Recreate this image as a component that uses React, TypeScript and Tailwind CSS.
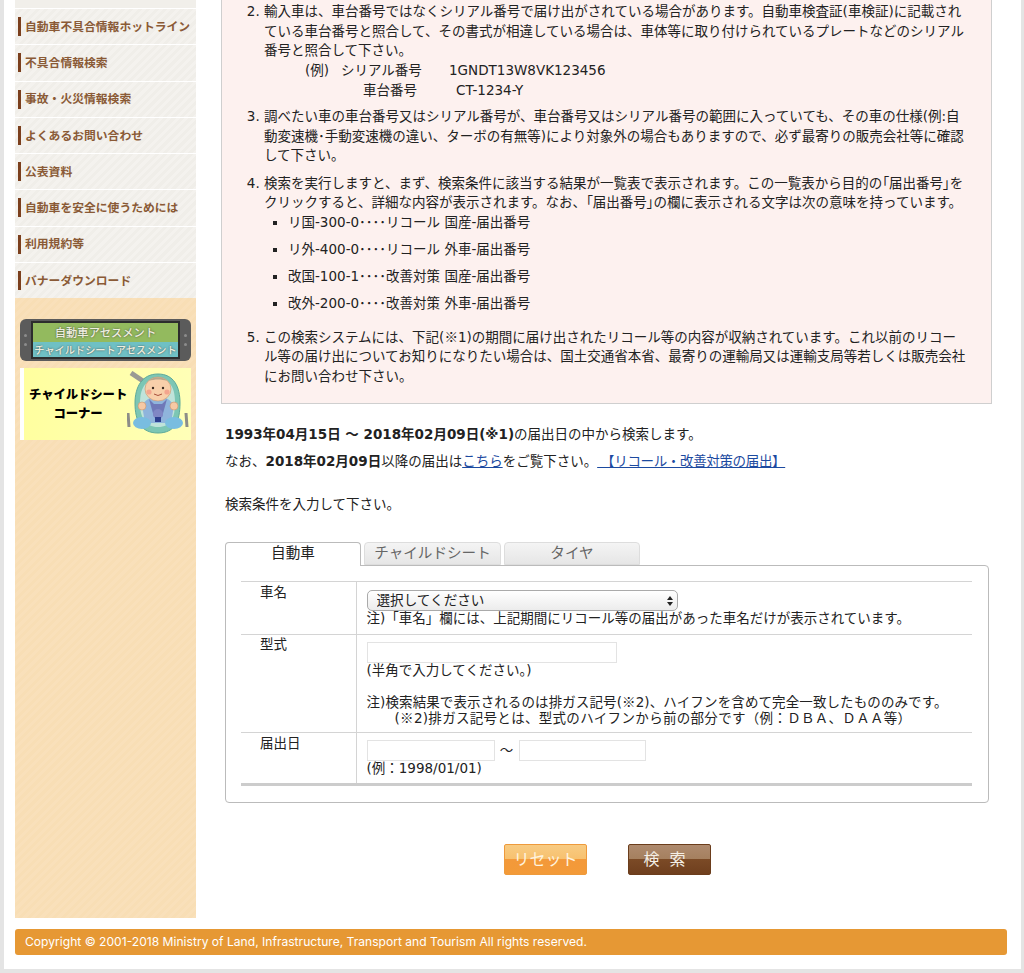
import React from "react";

const nav = [
  "自動車不具合情報ホットライン",
  "不具合情報検索",
  "事故・火災情報検索",
  "よくあるお問い合わせ",
  "公表資料",
  "自動車を安全に使うためには",
  "利用規約等",
  "バナーダウンロード",
];

const subs = [
  "リ国-300-0････リコール 国産-届出番号",
  "リ外-400-0････リコール 外車-届出番号",
  "改国-100-1････改善対策 国産-届出番号",
  "改外-200-0････改善対策 外車-届出番号",
];

function Baby() {
  return (
    <svg viewBox="0 0 62 66" className="h-[66px] w-[62px] shrink-0">
      <path d="M4 2 L16 10" stroke="#9a9a94" strokeWidth="5" fill="none" />
      <path d="M1 42 L2 56 M59 42 L60 56" stroke="#8d8d88" strokeWidth="3" fill="none" />
      <path d="M31 3 C47 3 53 16 53 32 C53 50 48 62 31 62 C14 62 8 50 8 32 C8 16 15 3 31 3 Z" fill="#7cc6b4" stroke="#5da99a" />
      <path d="M31 8 C44 8 48 18 48 32 C48 46 44 56 31 56 C18 56 13 46 13 32 C13 18 18 8 31 8 Z" fill="#bfe3da" />
      <path d="M16 40 C14 30 22 26 31 26 C40 26 48 30 46 40 L44 52 L18 52 Z" fill="#8fb4dc" />
      <path d="M22 28 L27 46 H35 L40 28 L35 33 H27 Z" fill="#6f78b8" />
      <circle cx="31" cy="43" r="5" fill="#8087c4" />
      <rect x="28" y="46" width="6" height="5" fill="#2d3f8f" />
      <ellipse cx="15" cy="52" rx="9" ry="6" fill="#79bde0" />
      <ellipse cx="47" cy="52" rx="9" ry="6" fill="#79bde0" />
      <circle cx="15" cy="35" r="4" fill="#f6c9a4" stroke="#c9946c" strokeWidth="0.6" />
      <circle cx="47" cy="35" r="4" fill="#f6c9a4" stroke="#c9946c" strokeWidth="0.6" />
      <ellipse cx="31" cy="18" rx="13" ry="12" fill="#f8cfaa" stroke="#c9946c" strokeWidth="0.6" />
      <path d="M22 10 C26 5 36 5 40 10 C35 8 27 8 22 10 Z" fill="#b8a78d" />
      <circle cx="26" cy="17" r="1.2" fill="#3a2a20" />
      <circle cx="36" cy="17" r="1.2" fill="#3a2a20" />
      <circle cx="22" cy="21" r="2.6" fill="#f3a58e" />
      <circle cx="40" cy="21" r="2.6" fill="#f3a58e" />
      <path d="M27 23 Q31 26 35 23" stroke="#a8503c" strokeWidth="1" fill="none" />
    </svg>
  );
}

function Arrows() {
  return (
    <svg viewBox="0 0 8 12" className="pointer-events-none absolute right-[4px] top-[5px] h-[12px] w-[8px]">
      <path d="M4 1 L7 5 H1 Z M4 11 L1 7 H7 Z" fill="#222" />
    </svg>
  );
}

function Screws() {
  return (
    <span className="flex w-[11px] shrink-0 flex-col items-center gap-[6px]">
      <span className="h-[3px] w-[3px] rounded-full bg-[#8c8c8c]" />
      <span className="h-[3px] w-[3px] rounded-full bg-[#8c8c8c]" />
    </span>
  );
}

function Mark() {
  return <span className="font-['Noto_Sans_CJK_JP',sans-serif] leading-none">※</span>;
}

function Quoted({ children }: { children: React.ReactNode }) {
  return <span className="[font-feature-settings:'palt'] font-['Noto_Sans_CJK_JP',sans-serif] leading-none">「{children}」</span>;
}

const field = "block h-[21px] border border-[#e3e3e3] bg-white";

export default function App() {
  return (
    <div className="flex h-[973px] w-[1024px] flex-col overflow-hidden border-b-4 border-l-4 border-r-[3px] border-[#e4e4e4] bg-white font-['DejaVu_Sans','Noto_Sans_CJK_JP',sans-serif] text-[13.5px] leading-[19.7px] text-[#222]">
      <div className="flex h-[918px] pl-[11px]">
        <aside className="flex h-full w-[181px] shrink-0 flex-col bg-[repeating-linear-gradient(135deg,#f9e0ba_0px,#f9e0ba_3px,#f8deb5_3px,#f8deb5_6px)]">
          <div className="h-[8px] bg-[#f1efea]" />
          <ul className="bg-white">
            {nav.map((n) => (
              <li
                key={n}
                className="mt-px flex h-[35.25px] items-center bg-[repeating-linear-gradient(135deg,#f4f2ee_0px,#f4f2ee_3px,#f0eee9_3px,#f0eee9_6px)] pl-[3px]"
              >
                <span className="mr-[4px] h-[19px] w-[3px] shrink-0 bg-[#7b3f1d]" />
                <span className="-mt-[2px] whitespace-nowrap font-['Noto_Sans_CJK_JP',sans-serif] text-[11.8px] font-bold text-[#8a5a36]">{n}</span>
              </li>
            ))}
          </ul>
          <div className="flex flex-col gap-[7px] px-[5px] pt-[21px]">
            <div className="flex h-[42px] items-center rounded-[6px] bg-[#5b5b5b]">
              <Screws />
              <div className="flex h-[38px] min-w-0 flex-1 flex-col overflow-hidden border-2 border-[#2d2d2d] text-center font-['Noto_Sans_CJK_JP',sans-serif] font-medium text-[#eeeedf] [text-shadow:0_0_2px_#444]">
                <span className="h-[19px] whitespace-nowrap bg-[#93ba5e] text-[11.3px] leading-[19px]">自動車アセスメント</span>
                <span className="h-[15px] whitespace-nowrap bg-[#6fc0c4] text-[10.2px] leading-[15px]">チャイルドシートアセスメント</span>
              </div>
              <Screws />
            </div>
            <div className="flex h-[72px] items-center border-l-4 border-white bg-[linear-gradient(100deg,#ffff9e,#ffffb8)] pl-[5px] pr-[4px]">
              <span className="w-[98px] shrink-0 whitespace-nowrap text-center font-['Noto_Sans_CJK_JP',sans-serif] text-[12.4px] font-black leading-[19px] tracking-[-0.1px] text-black">
                チャイルドシート
                <br />
                コーナー
              </span>
              <Baby />
            </div>
          </div>
        </aside>

        <main className="min-w-0 flex-1 pl-[29px] pr-[11px]">
          <section className="-ml-[4px] h-[404px] w-[771px] border-x border-b border-[#cfcfcf] bg-[#fdf1ef] pl-[42px] pt-[2px]">
            <ol start={2} className="list-decimal whitespace-nowrap">
              <li className="mb-[6.5px]">
                輸入車は、車台番号ではなくシリアル番号で届け出がされている場合があります。自動車検査証(車検証)に記載され
                <br />
                ている車台番号と照合して、その書式が相違している場合は、車体等に取り付けられているプレートなどのシリアル
                <br />
                番号と照合して下さい。
                <div className="flex pl-[41px]">
                  <span className="w-[36px]">(例)</span>
                  <span className="w-[108px]">シリアル番号</span>
                  <span>1GNDT13W8VK123456</span>
                </div>
                <div className="flex pl-[99px]">
                  <span className="w-[93px]">車台番号</span>
                  <span>CT-1234-Y</span>
                </div>
              </li>
              <li className="mb-[7.5px]">
                調べたい車の車台番号又はシリアル番号が、車台番号又はシリアル番号の範囲に入っていても、その車の仕様(例:自
                <br />
                動変速機･手動変速機の違い、ターボの有無等)により対象外の場合もありますので、必ず最寄りの販売会社等に確認
                <br />
                して下さい。
              </li>
              <li className="mb-[14px]">
                検索を実行しますと、まず、検索条件に該当する結果が一覧表で表示されます。この一覧表から目的の<Quoted>届出番号</Quoted>を
                <br />
                クリックすると、詳細な内容が表示されます。なお、<Quoted>届出番号</Quoted>の欄に表示される文字は次の意味を持っています。
                <ul className="list-[square] pl-[24px]">
                  {subs.map((s) => (
                    <li key={s} className="mb-[7.3px]">{s}</li>
                  ))}
                </ul>
              </li>
              <li>
                この検索システムには、下記(<Mark />1)の期間に届け出されたリコール等の内容が収納されています。これ以前のリコー
                <br />
                ル等の届け出についてお知りになりたい場合は、国土交通省本省、最寄りの運輸局又は運輸支局等若しくは販売会社
                <br />
                にお問い合わせ下さい。
              </li>
            </ol>
          </section>

          <div className="whitespace-nowrap pt-[17px] leading-[27px]">
            <p><b>1993年04月15日 ～ 2018年02月09日(※1)</b>の届出日の中から検索します。</p>
            <p>
              なお、<b>2018年02月09日</b>以降の届出は<a href="#" className="text-[#1c4aa0] underline">こちら</a>をご覧下さい。
              <a href="#" className="text-[#1c4aa0] underline tracking-[-0.35px]">&nbsp;【リコール・改善対策の届出】</a>
            </p>
            <p className="mt-[16px]">検索条件を入力して下さい。</p>
          </div>

          <div className="mt-[24px] flex h-[24px] gap-[3px] text-center text-[14.6px] leading-[20px]">
            <div className="relative z-10 h-[24px] w-[136px] rounded-t-[4px] border border-b-0 border-[#bbb] bg-white">自動車</div>
            <div className="h-[23px] w-[137px] rounded-t-[4px] border border-[#ddd] bg-gradient-to-b from-[#f4f4f4] to-[#e6e6e6] text-[#666]">チャイルドシート</div>
            <div className="h-[23px] w-[136px] rounded-t-[4px] border border-[#ddd] bg-gradient-to-b from-[#f4f4f4] to-[#e6e6e6] text-[#666]">タイヤ</div>
          </div>
          <div className="-mt-px h-[238px] w-[764px] rounded-b-[4px] rounded-tr-[4px] border border-[#bbb] px-[15px] pt-[15px]">
            <table className="w-[731px] border-collapse border-b-[3px] border-[#ccc]">
              <tbody>
                <tr className="h-[53px] border-y border-[#d4d4d4] align-top">
                  <th className="w-[115px] border-r border-[#d4d4d4] pl-[19px] pt-[1px] text-left font-normal">車名</th>
                  <td className="pl-[10px] pt-[8px]">
                    <div className="relative h-[21px] w-[311px]">
                      <select className="block h-[21px] w-full appearance-none rounded-[5px] border border-[#aaa] bg-gradient-to-b from-white to-[#ececec] pl-[9px] text-[13.6px] leading-[19px]">
                        <option>選択してください</option>
                      </select>
                      <Arrows />
                    </div>
                    <div className="-mt-[2px] whitespace-nowrap">注)「車名」欄には、上記期間にリコール等の届出があった車名だけが表示されています。</div>
                  </td>
                </tr>
                <tr className="h-[98px] border-b border-[#d4d4d4] align-top">
                  <th className="border-r border-[#d4d4d4] pl-[19px] text-left font-normal">型式</th>
                  <td className="pl-[10px] pt-[7px]">
                    <input className={`${field} w-[250px]`} />
                    <div className="-mt-[2px] whitespace-nowrap">(半角で入力してください。)</div>
                    <div className="mt-[13px] whitespace-nowrap leading-[16px]">
                      <span className="tracking-[0.1px]">注)検索結果で表示されるのは排ガス記号(<Mark />2)、ハイフンを含めて完全一致したもののみです。</span>
                      <br />
                      <span className="pl-[28px] tracking-[0.3px]">(<Mark />2)排ガス記号とは、型式のハイフンから前の部分です（例：ＤＢＡ、ＤＡＡ等）</span>
                    </div>
                  </td>
                </tr>
                <tr className="h-[52px] align-top">
                  <th className="border-r border-[#d4d4d4] pl-[19px] pt-[1px] text-left font-normal">届出日</th>
                  <td className="pl-[10px] pt-[7px]">
                    <div className="flex items-center">
                      <input className={`${field} w-[128px]`} />
                      <span className="w-[24px] text-center">～</span>
                      <input className={`${field} w-[127px]`} />
                    </div>
                    <div className="-mt-[2px] whitespace-nowrap">(例：1998/01/01)</div>
                  </td>
                </tr>
              </tbody>
            </table>
          </div>

          <div className="mt-[41px] flex gap-[41px] pl-[279px]">
            <button className="h-[31px] w-[83px] rounded-[2px] border border-[#ee9a3c] bg-[linear-gradient(#f8cb82_0%,#f7c16f_48%,#f3993a_50%,#f39a38_100%)] text-[16px] leading-[29px] text-[#fff3df]">リセット</button>
            <button className="h-[31px] w-[83px] rounded-[2px] border border-[#6b3d1c] bg-[linear-gradient(#ae8a6e_0%,#a5805f_48%,#7b4a26_50%,#6f3f1e_100%)] pr-[10px] text-[16px] leading-[29px] text-[#f5efe6]">検&nbsp;&nbsp;索</button>
          </div>
        </main>
      </div>

      <footer className="ml-[11px] mt-[11px] flex h-[26px] w-[992px] items-center rounded-[3px] bg-[#e69834] pl-[10px] font-['Inter',sans-serif] text-[12.1px] text-white">
        Copyright © 2001-2018 Ministry of Land, Infrastructure, Transport and Tourism All rights reserved.
      </footer>
    </div>
  );
}
